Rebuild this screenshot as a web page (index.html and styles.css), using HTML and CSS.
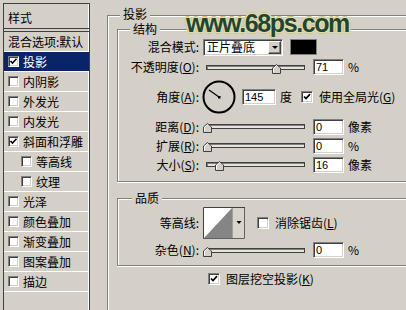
FILE: index.html
```html
<!DOCTYPE html>
<html lang="zh-CN">
<head>
  <meta charset="UTF-8">
  <meta name="viewport" content="width=device-width, initial-scale=1.0">
  <link rel="stylesheet" href="styles.css">
  <title>图层样式</title>
</head>
<body>
  <div class="dialog">
    <div class="styles-panel">
      <div class="panel-head">样式</div>
      <div class="panel-row">混合选项:默认</div>
      <div class="panel-row selected"><span class="check"><svg viewBox="0 0 9 9"><path d="M1.5 4l2 2 4-4.2" fill="none" stroke="#000" stroke-width="1.6"/></svg></span>投影</div>
      <div class="panel-row"><span class="check"></span>内阴影</div>
      <div class="panel-row"><span class="check"></span>外发光</div>
      <div class="panel-row"><span class="check"></span>内发光</div>
      <div class="panel-row"><span class="check"><svg viewBox="0 0 9 9"><path d="M1.5 4l2 2 4-4.2" fill="none" stroke="#000" stroke-width="1.6"/></svg></span>斜面和浮雕</div>
      <div class="panel-row sub"><span class="check"></span>等高线</div>
      <div class="panel-row sub"><span class="check"></span>纹理</div>
      <div class="panel-row"><span class="check"></span>光泽</div>
      <div class="panel-row"><span class="check"></span>颜色叠加</div>
      <div class="panel-row"><span class="check"></span>渐变叠加</div>
      <div class="panel-row"><span class="check"></span>图案叠加</div>
      <div class="panel-row"><span class="check"></span>描边</div>
    </div>

    <div class="main">
      <div class="group outer">
        <span class="group-title">投影</span>

        <div class="group structure">
          <span class="group-title">结构</span>
          <div class="row">
            <span class="label">混合模式:</span>
            <div class="select"><span>正片叠底</span><span class="drop"></span></div>
            <span class="swatch"></span>
          </div>
          <div class="row">
            <span class="label">不透明度(<u>O</u>):</span>
            <div class="slider"><svg class="thumb" style="left: 71%" viewBox="0 0 9 10"><path d="M0.5 9.5V4L4.5 0.5L8.5 4V9.5Z" fill="#d4d0c8" stroke="#404040"/><path d="M1.5 8.5V4.4L4.5 1.8" fill="none" stroke="#fff"/></svg></div>
            <span class="field">71</span>
            <span class="unit">%</span>
          </div>
          <div class="row angle">
            <span class="label">角度(<u>A</u>):</span>
            <svg class="dial" viewBox="0 0 34 34">
              <circle cx="17" cy="17" r="15.5" fill="none" stroke="#000" stroke-width="2"/>
              <line x1="17" y1="17" x2="7" y2="10" stroke="#000" stroke-width="1.2"/>
              <rect x="16" y="16" width="2.5" height="2.5" fill="#000"/>
            </svg>
            <span class="field wide">145</span>
            <span class="unit">度</span>
            <span class="check global"><svg viewBox="0 0 10 10"><path d="M2 4.5l2 2 4-4.3" fill="none" stroke="#000" stroke-width="1.7"/></svg></span>
            <span class="check-label">使用全局光(<u>G</u>)</span>
          </div>
          <div class="row short">
            <span class="label">距离(<u>D</u>):</span>
            <div class="slider"><svg class="thumb" style="left: 0%" viewBox="0 0 9 10"><path d="M0.5 9.5V4L4.5 0.5L8.5 4V9.5Z" fill="#d4d0c8" stroke="#404040"/><path d="M1.5 8.5V4.4L4.5 1.8" fill="none" stroke="#fff"/></svg></div>
            <span class="field">0</span>
            <span class="unit">像素</span>
          </div>
          <div class="row short">
            <span class="label">扩展(<u>R</u>):</span>
            <div class="slider"><svg class="thumb" style="left: 0%" viewBox="0 0 9 10"><path d="M0.5 9.5V4L4.5 0.5L8.5 4V9.5Z" fill="#d4d0c8" stroke="#404040"/><path d="M1.5 8.5V4.4L4.5 1.8" fill="none" stroke="#fff"/></svg></div>
            <span class="field">0</span>
            <span class="unit">%</span>
          </div>
          <div class="row short">
            <span class="label">大小(<u>S</u>):</span>
            <div class="slider"><svg class="thumb" style="left: 12%" viewBox="0 0 9 10"><path d="M0.5 9.5V4L4.5 0.5L8.5 4V9.5Z" fill="#d4d0c8" stroke="#404040"/><path d="M1.5 8.5V4.4L4.5 1.8" fill="none" stroke="#fff"/></svg></div>
            <span class="field">16</span>
            <span class="unit">像素</span>
          </div>
        </div>

        <div class="group quality">
          <span class="group-title">品质</span>
          <div class="row contour-row">
            <span class="label">等高线:</span>
            <svg class="contour" viewBox="0 0 42 32">
              <rect x="0" y="0" width="42" height="32" fill="#fff"/>
              <path d="M1 31L29 1V31Z" fill="#858585"/>
              <rect x="29" y="1" width="12" height="30" fill="#d8d4cc"/>
              <path d="M29.5 1V31" stroke="#a0a0a0"/>
              <path d="M33.5 14h5l-2.5 3z" fill="#000"/>
              <path d="M0.5 32V0.5H42" fill="none" stroke="#404040"/>
              <path d="M0 31.5H41.5V1" fill="none" stroke="#606060"/>
            </svg>
            <span class="check antialias"></span>
            <span class="check-label">消除锯齿(<u>L</u>)</span>
          </div>
          <div class="row">
            <span class="label">杂色(<u>N</u>):</span>
            <div class="slider"><svg class="thumb" style="left: 0%" viewBox="0 0 9 10"><path d="M0.5 9.5V4L4.5 0.5L8.5 4V9.5Z" fill="#d4d0c8" stroke="#404040"/><path d="M1.5 8.5V4.4L4.5 1.8" fill="none" stroke="#fff"/></svg></div>
            <span class="field">0</span>
            <span class="unit">%</span>
          </div>
        </div>

        <div class="row knockout">
          <span class="check"><svg viewBox="0 0 10 10"><path d="M2 4.5l2 2 4-4.3" fill="none" stroke="#000" stroke-width="1.7"/></svg></span>
          <span class="check-label">图层挖空投影(<u>K</u>)</span>
        </div>
      </div>
    </div>

    <div class="watermark">www.68ps.com</div>
  </div>
</body>
</html>
```

FILE: styles.css
```css
* {
  box-sizing: border-box;
}

body {
  margin: 0;
  width: 406px;
  height: 310px;
  overflow: hidden;
  background: #d4d0c8;
  color: #000;
  font-family: "Noto Sans CJK SC", sans-serif;
  font-size: 12px;
  line-height: 14px;
}

u {
  text-decoration-thickness: 1px;
  text-underline-offset: 1px;
}

.dialog {
  position: relative;
  display: flex;
  height: 310px;
  padding: 3px 0 0 3px;
  overflow: hidden;
}

/* left list of effects */
.styles-panel {
  flex: none;
  width: 87px;
  height: 307px;
  border: 1px solid #404040;
  border-bottom: none;
  box-shadow: inset -1px 0 #fff;
}

.panel-head {
  height: 28px;
  padding: 7px 0 0 4px;
  border-bottom: 4px double #404040;
}

.panel-row {
  display: flex;
  align-items: center;
  height: 20px;
  padding-left: 4px;
  border-bottom: 1px solid #fff;
  white-space: nowrap;
}

.panel-row.sub {
  padding-left: 17px;
}

.panel-row.selected {
  background: #0a246a;
  color: #fff;
}

.check {
  flex: none;
  display: block;
  width: 12px;
  height: 12px;
  background: #fff;
  border: 1px solid;
  border-color: #808080 #fff #fff #808080;
  box-shadow: inset 1px 1px #404040, inset -1px -1px #d4d0c8;
}

.check svg {
  display: block;
  width: 10px;
  height: 10px;
}

.panel-row .check {
  width: 11px;
  height: 11px;
  margin-right: 4px;
}

.panel-row .check svg {
  width: 9px;
  height: 9px;
}

/* right side: the group boxes run on past the window edge */
.main {
  flex: none;
  width: 316px;
  padding: 12px 0 0 17px;
}

.group {
  position: relative;
  border: 1px solid #808080;
  border-right: none;
  box-shadow: inset 1px 1px #fff, 0 1px #fff;
}

.group-title {
  position: absolute;
  top: -8px;
  left: 12px;
  padding: 0 3px;
  background: #d4d0c8;
}

.outer {
  height: 295px;
  padding: 13px 0 0 9px;
  border-bottom: none;
  box-shadow: inset 1px 1px #fff;
}

.outer > .group-title {
  top: -9px;
}

.structure {
  height: 153px;
  padding-top: 7px;
}

.quality {
  height: 68px;
  margin-top: 16px;
  padding-top: 7px;
}

.quality > .group-title {
  left: 14px;
}

.row {
  display: flex;
  align-items: center;
  height: 20px;
  white-space: nowrap;
}

.row.angle {
  height: 40px;
}

.row.short {
  height: 19px;
}

.row.contour-row {
  height: 34px;
}

.label {
  flex: none;
  width: 81px;
  text-align: right;
}

.select {
  display: flex;
  align-items: center;
  justify-content: space-between;
  width: 80px;
  height: 17px;
  margin-left: 4px;
  padding: 0 1px 0 3px;
  background: #fff;
  border: 1px solid;
  border-color: #808080 #fff #fff #808080;
  box-shadow: inset 1px 1px #404040, inset -1px -1px #d4d0c8;
}

.drop {
  display: flex;
  align-items: center;
  justify-content: center;
  width: 13px;
  height: 13px;
  background: #d4d0c8;
  border: 1px solid;
  border-color: #fff #404040 #404040 #fff;
  box-shadow: inset -1px -1px #808080;
}

.drop::after {
  content: "";
  border-left: 3px solid transparent;
  border-right: 3px solid transparent;
  border-top: 3px solid #000;
}

.swatch {
  width: 27px;
  height: 16px;
  margin-left: 7px;
  background: #000;
  border: 1px solid #808080;
}

.slider {
  position: relative;
  width: 99px;
  height: 5px;
  margin-left: 7px;
  background: #e6e3dc;
  border: 1px solid #404040;
  box-shadow: inset 1px 1px #808080;
}

.thumb {
  position: absolute;
  top: -2px;
  width: 9px;
  height: 10px;
  margin-left: -4px;
}

.field {
  display: block;
  width: 31px;
  height: 16px;
  margin-left: 8px;
  padding-left: 2px;
  background: #fff;
  border: 1px solid;
  border-color: #808080 #fff #fff #808080;
  box-shadow: inset 1px 1px #404040, inset -1px -1px #d4d0c8;
  font-family: "Liberation Sans", sans-serif;
  font-size: 11px;
  line-height: 14px;
}

.field.wide {
  width: 34px;
  margin-left: 6px;
}

.unit {
  margin-left: 4px;
}

.dial {
  width: 34px;
  height: 34px;
  margin-left: 3px;
}

.check.global {
  margin-left: 9px;
}

.check-label {
  margin-left: 6px;
}

.contour {
  width: 42px;
  height: 32px;
  margin-left: 4px;
}

.check.antialias {
  margin-left: 12px;
}

.knockout {
  margin-top: 3px;
  padding-left: 91px;
}

.watermark {
  position: absolute;
  top: 11px;
  left: 186px;
  color: #1f4536;
  font-family: "Liberation Sans", sans-serif;
  font-weight: bold;
  font-size: 25px;
  line-height: 24px;
  letter-spacing: -1.4px;
  text-shadow:
    1px 0 #e4dca6, -1px 0 #e4dca6, 0 1px #e4dca6, 0 -1px #e4dca6,
    1px 1px #e4dca6, -1px -1px #e4dca6, 1px -1px #e4dca6, -1px 1px #e4dca6,
    2px 0 #c8c690, -2px 0 #c8c690, 0 2px #c8c690, 0 -2px #c8c690;
}
```
